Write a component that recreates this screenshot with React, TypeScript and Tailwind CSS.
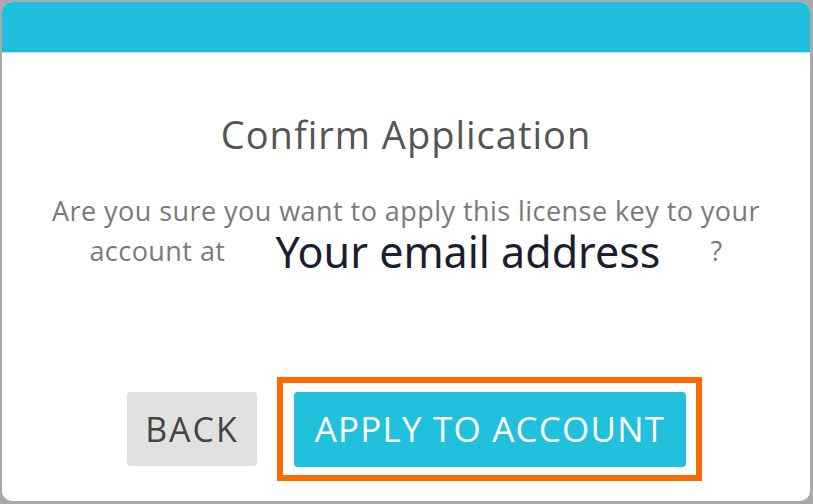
import React from "react";

export default function App() {
  return (
    <div className="w-[813px] h-[504px] bg-[#a9a9a9] pt-[2px] pl-[2px] overflow-hidden" style={{ fontFamily: '"Open Sans", "Noto Sans", sans-serif' }}>
      <div className="w-[808px] h-[499px] bg-white rounded-[10px] overflow-hidden flex flex-col">
        <div className="h-[51px] bg-[#1fbedb] border-b border-[#aeeaf5] shrink-0" />
        <h1 className="mt-[57px] text-center text-[38px] leading-[48px] tracking-[1px] text-[#555555]">Confirm Application</h1>
        <p className="mt-[33px] text-center text-[27px] leading-[40px] tracking-[0.45px] text-[#7a7a7a]">
          Are you sure you want to apply this license key to your
          <br />
          account at
          <span className="mx-[50px] text-[43px] leading-[24px] tracking-normal text-[#1b1f2d] align-[-7px]" style={{ fontFamily: '"Noto Sans", sans-serif' }}>
            Your email address
          </span>
          ?
        </p>
        <div className="mt-auto mb-[20px] ml-[125px] flex items-center gap-[20px]">
          <button className="w-[130px] h-[74px] rounded-[4px] bg-[#e1e1e1] text-[34px] tracking-[2px] text-[#444444]">BACK</button>
          <div className="border-[6px] border-[#ff6a00] pt-[9px] pb-[8px] pl-[11px] pr-[10px]">
            <button className="w-[392px] h-[75px] rounded-[4px] bg-[#21c0dc] text-[35px] tracking-[1.2px] text-white">APPLY TO ACCOUNT</button>
          </div>
        </div>
      </div>
    </div>
  );
}
